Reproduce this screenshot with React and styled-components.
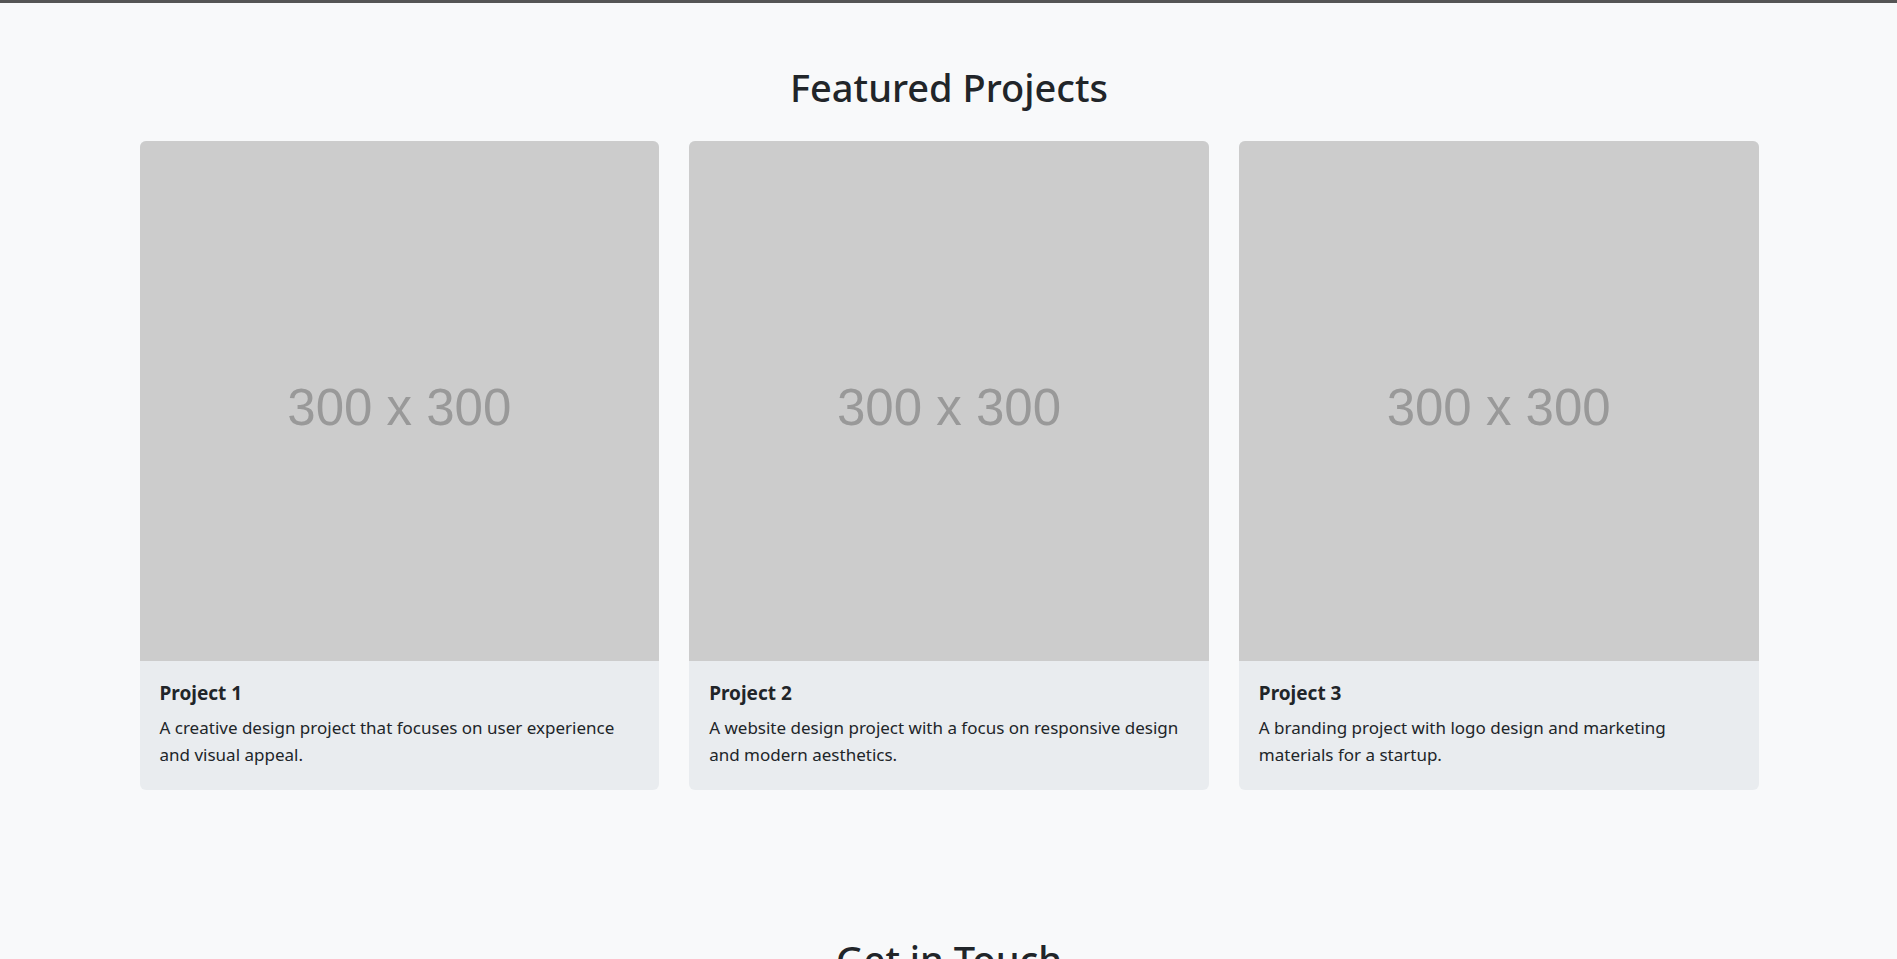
import styled, { createGlobalStyle } from "styled-components";

const projects = [
  {
    title: "Project 1",
    text: "A creative design project that focuses on user experience and visual appeal.",
  },
  {
    title: "Project 2",
    text: "A website design project with a focus on responsive design and modern aesthetics.",
  },
  {
    title: "Project 3",
    text: "A branding project with logo design and marketing materials for a startup.",
  },
];

const App = () => {
  return (
    <Page>
      <GlobalStyle />
      <TopBar />
      <Section $bottom={85}>
        <Container>
          <SectionTitle>Featured Projects</SectionTitle>
          <Grid>
            {projects.map((p) => (
              <Card key={p.title}>
                <Placeholder>
                  <span>300 x 300</span>
                </Placeholder>
                <CardBody>
                  <CardTitle>{p.title}</CardTitle>
                  <CardText>{p.text}</CardText>
                </CardBody>
              </Card>
            ))}
          </Grid>
        </Container>
      </Section>
      <Section $bottom={60}>
        <Container>
          <SectionTitle>Get in Touch</SectionTitle>
        </Container>
      </Section>
    </Page>
  );
};

const GlobalStyle = createGlobalStyle`
  html, body {
    margin: 0;
    padding: 0;
    background: #f8f9fa;
  }
  body {
    font-family: "Noto Sans", "Open Sans", sans-serif;
    color: #212529;
  }
  * {
    box-sizing: border-box;
  }
`;

const Page = styled.div`
  min-height: 100vh;
  background: #f8f9fa;
`;

const TopBar = styled.div`
  height: 3px;
  background: #555;
`;

const Section = styled.section`
  padding: 62px 0 ${(p) => p.$bottom}px;
`;

const Container = styled.div`
  max-width: 1620px;
  margin: 0 auto;
  padding-left: 1px;
`;

const SectionTitle = styled.h2`
  margin: 0 0 30px;
  text-align: center;
  font-size: 38px;
  font-weight: 500;
  line-height: 1.2;
  color: #212529;
`;

const Grid = styled.div`
  display: grid;
  grid-template-columns: repeat(3, 1fr);
  gap: 30px;
`;

const Card = styled.div`
  border-radius: 6px;
  overflow: hidden;
  background: #e9ecef;
`;

const Placeholder = styled.div`
  height: 520px;
  background: #cccccc;
  display: flex;
  align-items: center;
  justify-content: center;

  span {
    font-family: "Liberation Sans", Arial, sans-serif;
    font-size: 51px;
    color: #999999;
    filter: blur(0.4px);
    margin-top: 14px;
  }
`;

const CardBody = styled.div`
  padding: 21px 20px 22px;
`;

const CardTitle = styled.h5`
  margin: 0 0 10px;
  font-size: 19px;
  font-weight: 700;
  line-height: 1.2;
`;

const CardText = styled.p`
  margin: 0;
  font-size: 17px;
  line-height: 27px;
  color: #212529;
`;

export default App;
